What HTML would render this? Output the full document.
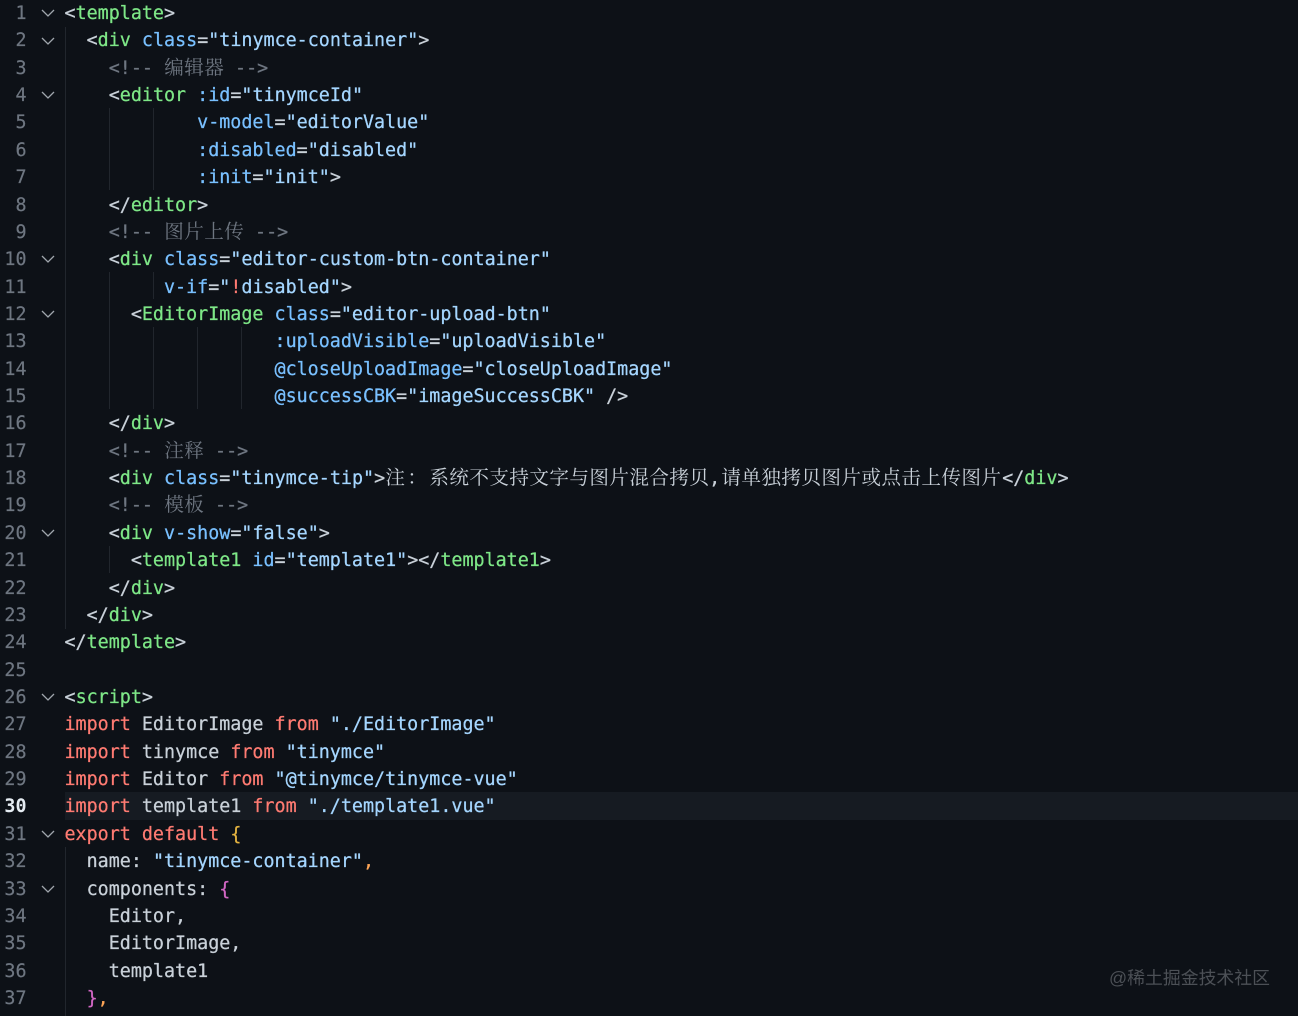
<!DOCTYPE html>
<html lang="zh"><head><meta charset="utf-8"><title>Code</title>
<style>
html,body{margin:0;padding:0;background:#0d1117}
#r{position:relative;width:1298px;height:1016px;overflow:hidden;background:#0d1117;font-family:"DejaVu Sans Mono","Liberation Mono",monospace;font-size:18.38px;color:#c9d1d9}
#code{position:absolute;left:64.5px;top:0;-webkit-text-stroke:.25px currentColor}
#nums{position:absolute;left:-.5px;top:0;width:27px;text-align:right;color:#6e7681;-webkit-text-stroke:.2px currentColor}
#code div,#nums div{height:27.36px;line-height:27.36px;white-space:pre}
#nums .a{color:#e6edf3;font-weight:bold;-webkit-text-stroke:0}
.hl{position:absolute;left:65px;right:0;top:792px;height:28px;background:#161b22}
.g{position:absolute;width:1px;background:#21262d}
svg{position:absolute;left:41px}
.t{color:#7ee787}.k{color:#79c0ff}.s{color:#a5d6ff}.r{color:#ff7b72}.c{color:#6e7681}.o{color:#ffa657}.y{color:#e3b341}.p{color:#d267c4}
.z{display:inline-block;width:20px;height:20px;line-height:20px;font:19.6px/20px "Noto Serif CJK SC","Liberation Serif",serif;text-align:center;vertical-align:-2px;overflow:hidden;-webkit-text-stroke:0}
.w{position:absolute;left:1109px;top:966px;font:17.86px/24px "Liberation Sans","Noto Sans CJK SC",sans-serif;color:#4c5056}
</style></head><body><div id="r">
<div class="hl"></div>
<div class="g" style="left:65px;top:27px;height:602px"></div>
<div class="g" style="left:65px;top:847px;height:169px"></div>
<div class="g" style="left:109px;top:108px;height:82px"></div>
<div class="g" style="left:153px;top:108px;height:82px"></div>
<div class="g" style="left:109px;top:272px;height:137px"></div>
<div class="g" style="left:153px;top:272px;height:27px"></div>
<div class="g" style="left:153px;top:327px;height:82px"></div>
<div class="g" style="left:197px;top:327px;height:82px"></div>
<div class="g" style="left:241px;top:327px;height:82px"></div>
<div class="g" style="left:109px;top:546px;height:27px"></div>
<div id="nums"><div>1</div><div>2</div><div>3</div><div>4</div><div>5</div><div>6</div><div>7</div><div>8</div><div>9</div><div>10</div><div>11</div><div>12</div><div>13</div><div>14</div><div>15</div><div>16</div><div>17</div><div>18</div><div>19</div><div>20</div><div>21</div><div>22</div><div>23</div><div>24</div><div>25</div><div>26</div><div>27</div><div>28</div><div>29</div><div class="a">30</div><div>31</div><div>32</div><div>33</div><div>34</div><div>35</div><div>36</div><div>37</div></div>
<svg style="top:6px" width="14" height="14" viewBox="0 0 14 14" fill="none" stroke="#a0a6ad" stroke-width="1.3"><path d="M1 4l6 6 6-6"/></svg>
<svg style="top:34px" width="14" height="14" viewBox="0 0 14 14" fill="none" stroke="#a0a6ad" stroke-width="1.3"><path d="M1 4l6 6 6-6"/></svg>
<svg style="top:88px" width="14" height="14" viewBox="0 0 14 14" fill="none" stroke="#a0a6ad" stroke-width="1.3"><path d="M1 4l6 6 6-6"/></svg>
<svg style="top:252px" width="14" height="14" viewBox="0 0 14 14" fill="none" stroke="#a0a6ad" stroke-width="1.3"><path d="M1 4l6 6 6-6"/></svg>
<svg style="top:307px" width="14" height="14" viewBox="0 0 14 14" fill="none" stroke="#a0a6ad" stroke-width="1.3"><path d="M1 4l6 6 6-6"/></svg>
<svg style="top:526px" width="14" height="14" viewBox="0 0 14 14" fill="none" stroke="#a0a6ad" stroke-width="1.3"><path d="M1 4l6 6 6-6"/></svg>
<svg style="top:690px" width="14" height="14" viewBox="0 0 14 14" fill="none" stroke="#a0a6ad" stroke-width="1.3"><path d="M1 4l6 6 6-6"/></svg>
<svg style="top:827px" width="14" height="14" viewBox="0 0 14 14" fill="none" stroke="#a0a6ad" stroke-width="1.3"><path d="M1 4l6 6 6-6"/></svg>
<svg style="top:882px" width="14" height="14" viewBox="0 0 14 14" fill="none" stroke="#a0a6ad" stroke-width="1.3"><path d="M1 4l6 6 6-6"/></svg>
<div id="code">
<div>&lt;<span class="t">template</span>&gt;</div>
<div>  &lt;<span class="t">div</span> <span class="k">class</span>=<span class="s">"tinymce-container"</span>&gt;</div>
<div class="c">    &lt;!-- <span class="z">编</span><span class="z">辑</span><span class="z">器</span> --&gt;</div>
<div>    &lt;<span class="t">editor</span> <span class="k">:id</span>=<span class="s">"tinymceId"</span></div>
<div>            <span class="k">v-model</span>=<span class="s">"editorValue"</span></div>
<div>            <span class="k">:disabled</span>=<span class="s">"disabled"</span></div>
<div>            <span class="k">:init</span>=<span class="s">"init"</span>&gt;</div>
<div>    &lt;/<span class="t">editor</span>&gt;</div>
<div class="c">    &lt;!-- <span class="z">图</span><span class="z">片</span><span class="z">上</span><span class="z">传</span> --&gt;</div>
<div>    &lt;<span class="t">div</span> <span class="k">class</span>=<span class="s">"editor-custom-btn-container"</span></div>
<div>         <span class="k">v-if</span>=<span class="s">"<span class="r">!</span>disabled"</span>&gt;</div>
<div>      &lt;<span class="t">EditorImage</span> <span class="k">class</span>=<span class="s">"editor-upload-btn"</span></div>
<div>                   <span class="k">:uploadVisible</span>=<span class="s">"uploadVisible"</span></div>
<div>                   <span class="k">@closeUploadImage</span>=<span class="s">"closeUploadImage"</span></div>
<div>                   <span class="k">@successCBK</span>=<span class="s">"imageSuccessCBK"</span> /&gt;</div>
<div>    &lt;/<span class="t">div</span>&gt;</div>
<div class="c">    &lt;!-- <span class="z">注</span><span class="z">释</span> --&gt;</div>
<div>    &lt;<span class="t">div</span> <span class="k">class</span>=<span class="s">"tinymce-tip"</span>&gt;<span class="z">注</span><span class="z" style="width:24px">：</span><span class="z">系</span><span class="z">统</span><span class="z">不</span><span class="z">支</span><span class="z">持</span><span class="z">文</span><span class="z">字</span><span class="z">与</span><span class="z">图</span><span class="z">片</span><span class="z">混</span><span class="z">合</span><span class="z">拷</span><span class="z">贝</span><span style="margin-right:1px">,</span><span class="z">请</span><span class="z">单</span><span class="z">独</span><span class="z">拷</span><span class="z">贝</span><span class="z">图</span><span class="z">片</span><span class="z">或</span><span class="z">点</span><span class="z">击</span><span class="z">上</span><span class="z">传</span><span class="z">图</span><span class="z" style="margin-right:1px">片</span>&lt;/<span class="t">div</span>&gt;</div>
<div class="c">    &lt;!-- <span class="z">模</span><span class="z">板</span> --&gt;</div>
<div>    &lt;<span class="t">div</span> <span class="k">v-show</span>=<span class="s">"false"</span>&gt;</div>
<div>      &lt;<span class="t">template1</span> <span class="k">id</span>=<span class="s">"template1"</span>&gt;&lt;/<span class="t">template1</span>&gt;</div>
<div>    &lt;/<span class="t">div</span>&gt;</div>
<div>  &lt;/<span class="t">div</span>&gt;</div>
<div>&lt;/<span class="t">template</span>&gt;</div>
<div> </div>
<div>&lt;<span class="t">script</span>&gt;</div>
<div><span class="r">import</span> EditorImage <span class="r">from</span> <span class="s">"./EditorImage"</span></div>
<div><span class="r">import</span> tinymce <span class="r">from</span> <span class="s">"tinymce"</span></div>
<div><span class="r">import</span> Editor <span class="r">from</span> <span class="s">"@tinymce/tinymce-vue"</span></div>
<div><span class="r">import</span> template1 <span class="r">from</span> <span class="s">"./template1.vue"</span></div>
<div><span class="r">export default</span> <span class="y">{</span></div>
<div>  name: <span class="s">"tinymce-container"</span><span class="o">,</span></div>
<div>  components: <span class="p">{</span></div>
<div>    Editor,</div>
<div>    EditorImage,</div>
<div>    template1</div>
<div>  <span class="p">}</span><span class="o">,</span></div>
</div>
<div class="w">@稀土掘金技术社区</div>
</div></body></html>
